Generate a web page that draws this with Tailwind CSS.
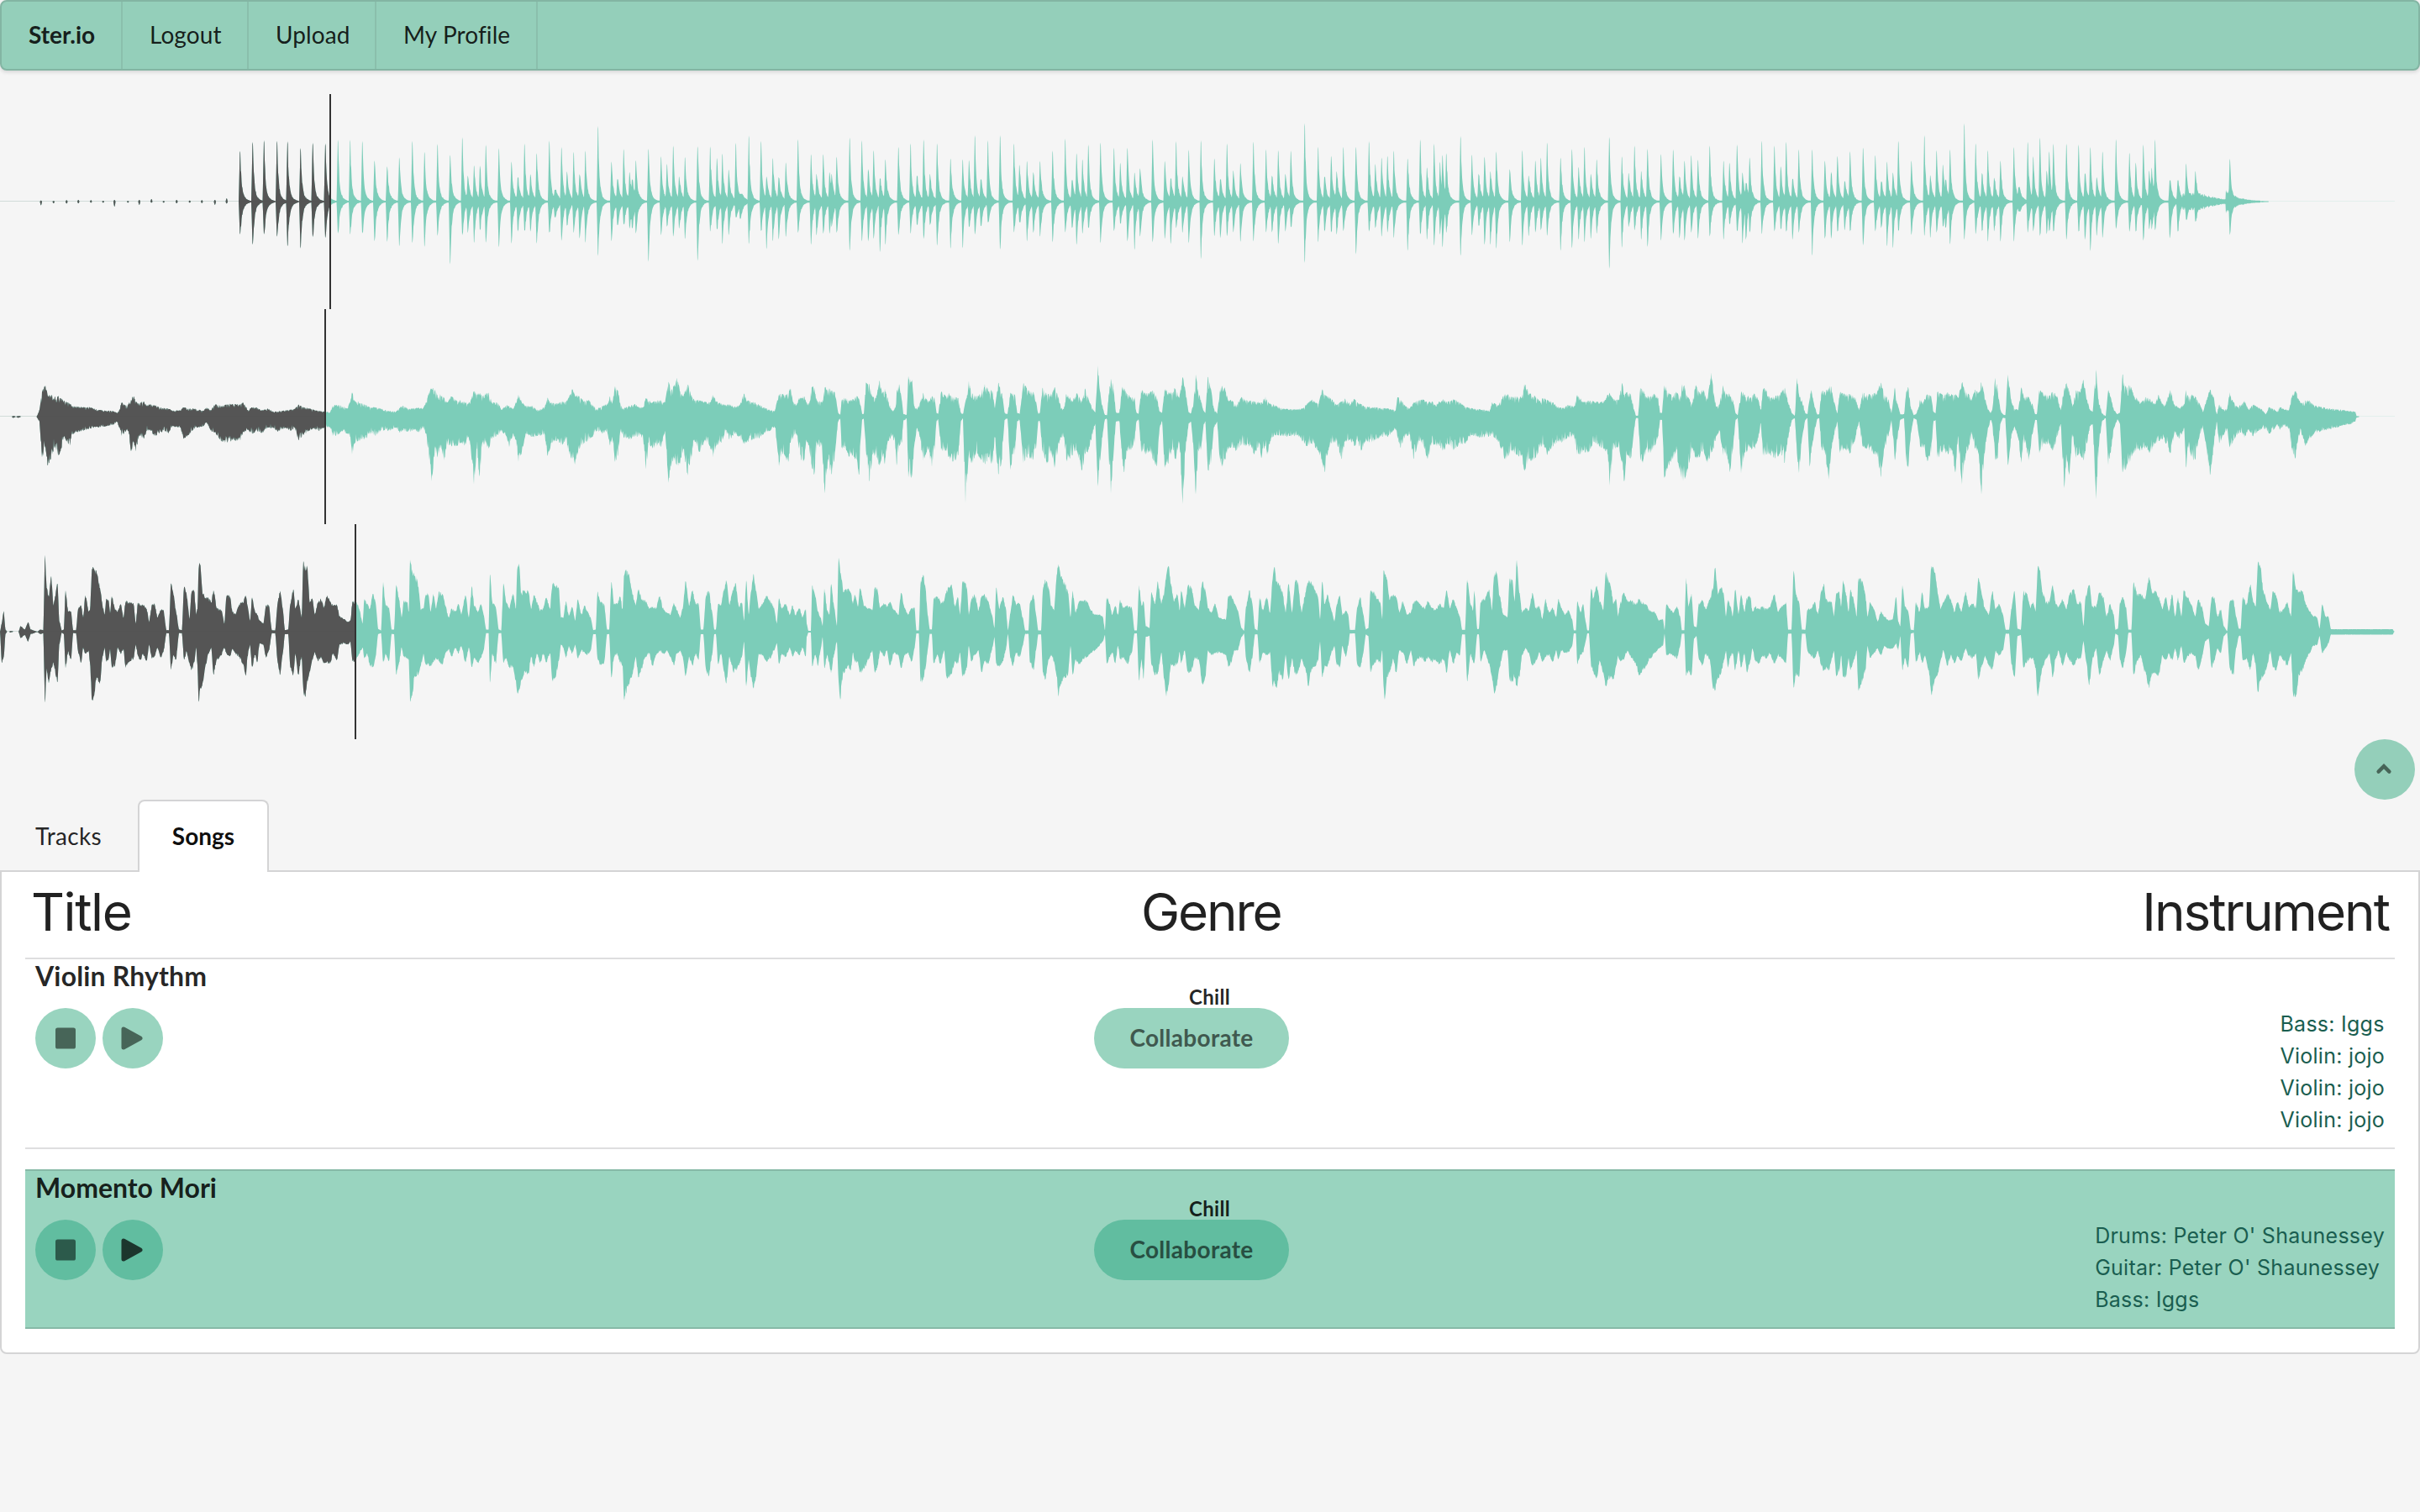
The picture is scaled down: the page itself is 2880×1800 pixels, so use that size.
<!DOCTYPE html>
<html lang="en">
<head>
<meta charset="utf-8">
<title>Ster.io</title>
<script src="https://cdn.jsdelivr.net/npm/@tailwindcss/browser@4"></script>
</head>
<body class="bg-[#f5f5f5] text-[28px] leading-[28px] font-['Lato',sans-serif] text-black/87 min-h-screen">

<nav class="flex h-[84px] rounded-lg border-2 border-[#83b5a3] bg-[#94cfba] shadow-[0_2px_4px_0_rgba(34,36,38,0.15)]">
  <a class="flex items-center pl-8 pr-[30px] pb-0.5 w-[144px] border-r-2 border-[#8abfac] font-bold">Ster.io</a>
  <a class="flex items-center pl-8 pr-[30px] pb-0.5 w-[150px] border-r-2 border-[#8abfac] tracking-[0.1px]">Logout</a>
  <a class="flex items-center pl-8 pr-[30px] pb-0.5 w-[152px] border-r-2 border-[#8abfac] tracking-[0.1px]">Upload</a>
  <a class="flex items-center pl-8 pr-[30px] pb-0.5 w-[192px] border-r-2 border-[#8abfac] tracking-[0.1px] whitespace-nowrap">My Profile</a>
</nav>

<main class="pt-7">
  <section>
    <div class="relative h-64"><svg id="drums" class="block w-full h-64" viewBox="0 0 2880 256"></svg><div class="absolute inset-y-0 left-[392px] w-0.5 bg-[#333]"></div></div>
    <div class="relative h-64"><svg id="guitar" class="block w-full h-64" viewBox="0 0 2880 256"></svg><div class="absolute inset-y-0 left-[386px] w-0.5 bg-[#333]"></div></div>
    <div class="relative h-64"><svg id="bass" class="block w-full h-64" viewBox="0 0 2880 256"></svg><div class="absolute inset-y-0 left-[422px] w-0.5 bg-[#333]"></div></div>
  </section>

  <div class="flex justify-end pr-1.5">
    <button class="size-[72px] rounded-full bg-[#94cfba] flex items-center justify-center">
      <svg class="w-[20px] h-[14px] mr-0.5 -mt-0.5" viewBox="0 0 20 14"><path d="M3.6 10.6 L10 4.2 L16.4 10.6" fill="none" stroke="#476558" stroke-width="4.4" stroke-linecap="round" stroke-linejoin="miter"/></svg>
    </button>
  </div>

  <div class="flex h-[84px]">
    <a class="flex items-center pl-[42px] w-[164px] pt-px tracking-[0.3px]">Tracks</a>
    <a class="relative z-10 flex items-center justify-center w-[156px] h-[86px] border-2 border-b-0 border-[#d4d4d5] rounded-t-lg bg-white font-bold text-black/95 pb-0.5">Songs</a>
  </div>

  <section class="h-[576px] border-2 border-[#d4d4d5] rounded-b-lg bg-white px-7">
    <header class="flex h-[102px] font-['Inter',sans-serif] text-[62px] leading-[96px]">
      <h2 class="w-[1272px] pl-[7px] tracking-[-1.4px]">Title</h2>
      <h2 class="w-[232px] pl-[56px] tracking-[-2.2px]">Genre</h2>
      <h2 class="flex-1 text-right pr-[7px] tracking-[-2px]">Instrument</h2>
    </header>

    <article class="flex h-[228px] border-y-2 border-[#dededf]">
      <div class="w-[1272px] pl-3">
        <h3 class="h-[58px] pt-1 text-[32px] leading-8 font-bold tracking-[0.15px]">Violin Rhythm</h3>
        <div class="flex gap-2 text-[#476558]">
          <button class="size-[72px] rounded-full bg-[#99d4bf] flex items-center justify-center"><svg class="size-[26px]" viewBox="0 0 26 26"><rect x="1" y="0.5" width="24" height="25" rx="2.6" fill="currentColor"/></svg></button>
          <button class="size-[72px] rounded-full bg-[#99d4bf] flex items-center justify-center"><svg class="w-[26px] h-[30px] mr-0.5" viewBox="0 0 26 30"><path d="M3 4v22L23 15z" fill="currentColor" stroke="currentColor" stroke-width="5" stroke-linejoin="round"/></svg></button>
        </div>
      </div>
      <div class="w-[232px]">
        <p class="h-[58px] pl-[43px] pt-[33px] text-center text-[24px] leading-6 font-bold tracking-[0.3px]">Chill</p>
        <button class="w-full h-[72px] rounded-full bg-[#99d4bf] text-[#40594f] font-bold tracking-[0.3px] pb-0.5">Collaborate</button>
      </div>
      <div class="flex-1 flex justify-end pr-3 pt-[58px]">
        <ul class="font-['Inter',sans-serif] text-[25px] leading-[38px] tracking-[0.25px] text-[#1a5e50]">
          <li>Bass: Iggs</li><li>Violin: jojo</li><li>Violin: jojo</li><li>Violin: jojo</li>
        </ul>
      </div>
    </article>

    <article class="mt-6 flex h-[190px] border-y-2 border-[#86b9a7] bg-[#99d4bf]">
      <div class="w-[1272px] pl-3">
        <h3 class="h-[58px] pt-1 text-[32px] leading-8 font-bold">Momento Mori</h3>
        <div class="flex gap-2">
          <button class="size-[72px] rounded-full bg-[#61bda0] text-[#2c5a4b] flex items-center justify-center"><svg class="size-[26px]" viewBox="0 0 26 26"><rect x="1" y="0.5" width="24" height="25" rx="2.6" fill="currentColor"/></svg></button>
          <button class="size-[72px] rounded-full bg-[#61bda0] text-[#1c362d] flex items-center justify-center"><svg class="w-[26px] h-[30px] mr-0.5" viewBox="0 0 26 30"><path d="M3 4v22L23 15z" fill="currentColor" stroke="currentColor" stroke-width="5" stroke-linejoin="round"/></svg></button>
        </div>
      </div>
      <div class="w-[232px]">
        <p class="h-[58px] pl-[43px] pt-[33px] text-center text-[24px] leading-6 font-bold tracking-[0.3px]">Chill</p>
        <button class="w-full h-[72px] rounded-full bg-[#61bda0] text-[#284f42] font-bold tracking-[0.3px] pb-0.5">Collaborate</button>
      </div>
      <div class="flex-1 flex justify-end pr-3 pt-[58px]">
        <ul class="font-['Inter',sans-serif] text-[25px] leading-[38px] tracking-[0.26px] text-[#1a5e50]">
          <li>Drums: Peter O' Shaunessey</li><li>Guitar: Peter O' Shaunessey</li><li>Bass: Iggs</li>
        </ul>
      </div>
    </article>
  </section>
</main>

<script>
// Each track is stored in three chunks of 960px. A chunk lists "x:top,bottom" samples
// on its own grid: x runs 0-1568, and mid/scale give the zero line and vertical units per pixel.
const drums = [
 {mid:718, scale:3, data:"79:714,731;104:716,724;129:713,725;152:712,724;176:713,722;200:715,722;222:712,735;248:716,722;270:712,729;294:709,722;318:716,722;343:712,724;368:714,722;392:713,723;417:712,729;440:707,725;466:537,835;491:505,872;513:499,835;538:501,843;559:503,878;584:527,885;608:508,845;632:510,848;657:497,832;680:497,836;704:501,832;728:571,860;752:592,862;776:560,878;801:501,866;825:540,880;850:512,840;875:551,942;898:488,838;909:625,830;921:588,866;933:590,820;944:515,865;969:527,881;994:575,868;1006:630,825;1019:510,824;1031:620,825;1043:545,868;1067:500,830;1078:675,775;1091:523,858;1102:610,805;1115:540,830;1126:620,850;1138:536,865;1162:448,912;1188:575,860;1200:637,803;1212:530,800;1223:612,815;1228:638,815;1236:570,832;1260:529,933;1285:556,838;1296:583,808;1308:518,843;1320:628,815;1331:558,852;1356:520,930;1380:521,825;1393:562,818;1404:546,870;1416:603,838;1430:508,775;1438:690,780;1455:482,870;1479:501,824;1490:628,888;1502:562,860;1513:630,853;1527:578,845;1551:495,830"},
 {mid:273, scale:1.96, data:"8:162,374;19:208,352;32:162,348;44:204,348;48:208,332;58:168,346;83:123,388;107:130,366;119:197,366;130:153,360;142:218,391;153:174,374;178:145,351;202:137,348;214:212,328;227:128,360;239:208,328;253:137,376;279:172,383;303:174,382;315:176,333;327:118,350;338:220,331;352:130,322;376:118,385;403:137,345;413:187,322;428:178,366;440:204,346;453:178,355;478:154,368;502:126,345;515:222,335;524:160,374;536:174,348;547:140,335;571:135,370;597:147,342;609:182,325;623:147,366;637:205,386;648:195,355;672:128,368;696:178,360;707:218,372;718:132,335;730:214,346;742:152,370;766:130,407;792:172,354;804:220,358;817:137,354;829:200,345;843:183,367;868:133,366;893:151,345;904:212,345;916:153,372;930:208,343;941:154,333;968:90,416;994:145,368;1006:214,343;1019:166,345;1030:202,350;1043:145,342;1067:145,396;1093:132,343;1105:185,335;1117:170,355;1129:166,345;1141:154,358;1168:172,388;1192:128,350;1205:193,362;1219:138,376;1231:180,350;1236:164,380;1243:160,346;1271:120,400;1293:163,352;1306:208,330;1317:168,374;1329:202,374;1340:156,383;1366:197,368;1391:153,376;1403:212,354;1416:177,345;1427:170,340;1439:135,353;1465:170,388;1487:150,382;1500:192,362;1512:145,368;1524:208,360;1535:174,348;1560:122,430"},
 {mid:249, scale:1.782, data:"16:153,347;29:188,303;41:130,310;54:184,330;66:137,345;92:148,332;116:138,318;128:195,327;138:162,332;151:150,315;164:160,328;187:130,323;214:162,330;225:166,297;240:128,312;251:187,338;257:209,330;265:155,315;288:120,318;313:130,312;325:174,308;336:122,313;348:200,330;360:138,315;386:138,364;411:162,328;423:186,328;435:152,313;449:205,310;460:142,312;485:134,342;509:150,312;520:206,305;532:164,344;543:187,348;554:120,312;579:162,320;604:108,322;616:193,326;628:140,315;640:170,303;645:202,305;654:138,340;682:83,330;704:125,318;716:188,312;728:140,334;740:198,312;752:162,334;778:133,334;787:218,270;805:122,315;816:153,312;829:113,322;842:183,318;847:142,312;855:126,313;880:126,330;904:128,313;916:188,330;927:133,354;939:197,322;951:142,326;977:116,307;1003:145,313;1015:166,313;1030:128,332;1041:183,308;1046:177,308;1053:117,310;1081:203,327;1097:203,313;1113:168,288;1131:184,292;1198:158,320"}
];
const guitar = [
 {mid:393, scale:2.904, data:"0:393,393;23:393,393;25:391,397;28:391,396;31:393,393;35:391,397;38:391,395;41:393,393;71:393,393;73:388,398;77:370,410;82:310,530;88:288,490;92:320,555;98:322,535;106:328,490;112:325,520;118:330,510;124:340,460;136:350,490;140:358,450;160:362,440;175:362,432;190:370,428;205:373,425;220:374,420;228:381,412;232:370,430;236:346,458;243:355,445;250:352,440;255:335,510;260:325,480;264:342,510;270:348,455;280:344,465;285:355,440;292:352,437;300:355,458;310:362,445;320:365,440;327:366,448;335:373,426;350:372,428;357:362,466;365:366,455;380:367,430;395:374,425;402:362,412;410:372,440;418:352,445;430:358,475;443:352,478;452:352,470;467:352,474;473:346,445;482:372,437;490:362,450;498:362,440;510:372,447;520:366,430;530:376,430;540:376,442;555:372,430;565:370,440;573:368,430;580:352,470;590:362,455;600:366,440;610:370,432;620:374,440;632:377,428;642:378,428;647:356,458;655:354,455;665:358,440;675:364,450;680:345,460;684:312,520;690:340,480;700:348,470;712:355,465;720:362,445;730:362,458;740:366,438;755:374,440;770:376,430;777:364,445;783:356,440;795:368,442;805:364,438;815:364,445;822:366,430;828:345,450;834:312,520;839:300,610;846:302,500;850:318,530;857:320,490;863:330,540;870:345,480;877:325,490;887:340,490;895:338,480;903:345,490;910:348,460;915:340,490;921:308,620;927:318,500;932:318,595;938:322,480;950:314,500;956:346,465;968:346,455;975:370,440;985:355,460;990:358,495;997:368,450;1003:345,470;1008:318,545;1014:345,510;1022:358,450;1035:358,460;1047:372,455;1058:362,450;1064:330,525;1072:348,480;1085:350,470;1090:342,490;1100:345,470;1106:330,510;1112:302,535;1118:325,555;1125:325,500;1135:342,480;1145:338,470;1152:355,460;1160:368,440;1172:358,450;1180:350,440;1186:325,490;1190:350,460;1196:290,545;1201:305,520;1206:355,440;1212:366,460;1222:358,470;1235:352,460;1245:362,455;1250:362,470;1255:330,570;1261:340,480;1268:345,500;1278:340,490;1285:340,495;1293:345,440;1299:276,615;1306:300,540;1311:285,530;1316:262,558;1322:310,545;1328:325,500;1337:286,590;1343:318,540;1349:335,470;1360:338,510;1370:345,470;1380:345,490;1386:318,530;1392:340,490;1402:350,480;1410:354,440;1418:352,470;1428:360,450;1437:355,460;1446:316,485;1452:338,475;1462:345,470;1475:352,465;1485:362,450;1495:370,440;1506:375,430;1510:345,480;1514:320,560;1520:318,510;1527:320,530;1532:312,545;1537:298,480;1542:345,460;1548:355,450;1553:330,500;1558:330,540;1563:325,540;1567:345,470"},
 {mid:774, scale:1.96, data:"0:742,830;5:745,840;10:706,885;15:708,905;20:738,835;30:742,850;35:708,948;42:710,870;48:715,905;54:718,870;58:740,820;61:765,785;65:770,778;68:735,845;75:732,840;82:738,865;90:735,860;97:728,870;102:735,905;105:750,820;108:768,780;111:768,780;115:696,850;122:700,920;128:730,860;135:732,860;141:692,885;147:722,860;152:710,882;157:730,835;163:755,820;168:762,820;173:750,850;175:720,885;180:700,840;185:740,830;188:768,785;194:770,778;198:682,912;205:690,905;209:750,840;215:758,800;220:745,820;226:720,875;235:740,845;243:728,888;248:730,850;252:765,785;256:768,780;261:718,850;270:728,850;277:722,865;285:730,875;295:732,860;300:765,785;304:768,778;309:740,970;315:692,860;322:722,880;330:730,850;338:722,870;346:700,880;354:718,865;361:715,880;366:755,820;372:698,905;380:720,870;385:765,782;390:768,778;396:720,895;405:725,850;409:765,785;414:768,782;421:698,880;430:715,860;440:718,870;446:740,845;450:766,785;453:766,785;458:710,850;467:725,880;475:722,850;482:708,890;490:732,835;495:755,820;500:757,820;505:722,875;515:738,860;525:722,850;535:740,895;541:710,860;548:735,850;555:755,815;561:765,790;566:658,932;571:720,870;576:755,810;580:770,780;584:770,780;587:720,860;591:688,948;597:710,850;601:764,785;608:766,784;613:706,870;617:710,900;622:722,850;630:730,850;637:730,835;641:765,785;645:768,780;650:714,850;658:722,860;666:722,850;673:715,870;681:732,885;686:762,800;691:765,785;696:712,890;703:718,880;710:720,850;717:710,870;724:732,830;731:684,972;737:718,850;742:764,790;747:766,786;752:740,850;756:678,950;761:720,850;766:735,850;771:760,800;775:766,785;780:684,895;786:710,880;791:755,800;798:767,785;803:720,870;807:704,888;813:712,870;819:738,850;827:738,840;835:748,850;845:730,835;855:738,840;862:738,840;870:740,860;880:742,835;884:742,868;892:728,835;895:740,860;903:745,820;915:750,815;925:756,818;940:757,818;955:758,815;965:755,830;973:745,840;982:736,835;995:746,850;1003:712,880;1007:725,900;1012:728,860;1018:732,835;1030:748,830;1040:740,870;1047:734,830;1055:745,825;1064:734,840;1072:745,830;1077:746,852;1085:752,830;1100:752,830;1115:754,820;1130:756,818;1145:760,800;1148:730,820;1155:735,845;1162:748,820;1172:755,815;1180:742,870;1190:738,830;1200:736,840;1207:742,870;1215:740,835;1222:748,838;1230:740,840;1238:735,850;1248:740,835;1258:736,850;1268:740,835;1280:752,835;1292:755,815;1310:758,820;1328:760,818;1332:742,815;1345:748,830;1357:722,870;1370:730,850;1380:728,860;1390:732,860;1395:700,895;1405:720,870;1415:728,870;1425:738,845;1432:733,835;1440:736,860;1450:742,840;1460:752,830;1470:755,830;1480:748,820;1492:750,820;1498:725,860;1510:742,850;1520:738,855;1530:740,830;1540:742,840;1550:740,845;1557:725,860;1561:720,930;1567:735,850"},
 {mid:705, scale:1.782, data:"0:668,770;10:672,765;17:636,800;21:660,838;26:655,780;34:660,790;40:690,735;44:703,708;48:703,708;52:648,790;57:650,800;64:665,775;72:662,780;80:658,765;87:668,745;91:697,712;95:697,712;99:640,830;106:655,805;115:665,790;122:655,780;130:665,820;134:638,835;140:645,830;147:668,800;153:680,770;160:640,790;167:655,790;175:650,770;183:670,800;190:614,780;195:655,770;200:685,745;207:680,735;213:640,785;220:660,780;226:658,820;233:670,770;238:698,712;242:702,708;248:655,822;256:660,780;265:665,770;274:658,770;282:670,750;287:690,718;291:650,785;296:648,785;305:668,780;314:665,790;325:658,780;333:645,800;340:675,750;347:698,712;353:703,708;357:625,780;361:660,822;367:670,750;373:698,712;377:700,708;381:665,808;385:650,780;390:680,740;396:700,710;400:700,708;404:652,770;412:655,780;419:645,835;423:642,780;428:670,750;435:698,715;440:655,780;450:660,770;460:660,780;470:665,750;478:692,715;484:655,765;495:660,770;505:660,780;513:655,780;520:635,830;527:660,770;535:670,745;541:698,712;547:645,795;553:680,745;558:700,712;565:700,708;569:655,800;573:645,810;578:685,740;584:702,708;590:698,712;596:670,765;603:675,770;610:660,795;617:662,780;622:695,715;626:698,712;630:655,790;640:660,775;650:655,780;658:660,775;665:660,820;670:665,750;678:635,845;685:655,780;692:660,765;697:670,740;703:650,770;710:655,780;715:635,865;720:655,790;727:685,740;733:698,712;737:690,720;742:625,795;747:645,790;752:690,720;757:700,708;762:702,708;767:618,805;773:670,750;780:690,725;787:690,750;793:645,800;799:665,750;807:665,795;815:680,740;820:700,712;823:700,712;828:650,780;838:660,760;847:662,760;855:655,775;863:665,745;870:692,720;876:645,852;881:635,790;886:650,825;893:685,745;899:652,790;907:655,780;914:630,795;920:670,760;927:692,725;932:695,720;938:608,875;943:670,770;950:698,715;957:704,708;962:650,805;967:665,780;973:690,730;980:700,710;985:695,720;990:618,820;995:645,815;1003:640,800;1010:655,780;1018:670,770;1027:675,775;1035:665,765;1043:668,780;1053:680,760;1060:660,755;1068:680,750;1075:675,760;1083:650,780;1090:680,740;1100:688,750;1110:680,730;1113:650,810;1118:665,765;1125:660,790;1132:665,790;1140:680,740;1147:695,730;1153:670,770;1160:650,825;1167:665,770;1173:700,715;1178:680,760;1185:690,745;1193:690,730;1198:655,768;1205:675,755;1213:685,740;1222:680,735;1227:672,748;1235:690,730;1243:680,745;1252:685,735;1260:690,730;1268:700,730;1275:685,740;1285:690,730;1290:695,720;1295:685,732;1303:690,722;1313:692,730;1318:665,770;1326:652,790;1333:672,745;1338:678,740;1345:672,765;1352:672,750;1362:682,740;1375:685,735;1390:688,730;1405:690,728;1420:692,722;1435:694,720;1442:695,715;1445:704,707;1449:704,706;1450:705,705;1567:705,705"}
];
const bass = [
 {mid:1137, scale:2.904, data:"0:1137,1137;3:1110,1240;7:1068,1220;11:1130,1145;14:1137,1137;18:1137,1137;20:1135,1140;24:1135,1138;26:1137,1137;36:1137,1137;40:1118,1158;48:1130,1148;55:1105,1170;60:1130,1145;73:1137,1138;78:1130,1145;84:1132,1142;87:880,1375;91:990,1260;95:1020,1310;100:950,1260;104:1050,1240;112:978,1305;115:1100,1180;120:1133,1140;124:1130,1145;127:998,1260;132:1070,1205;138:1070,1230;142:1132,1142;148:1132,1142;152:1060,1205;158:1050,1240;162:1090,1190;166:1015,1210;172:1070,1200;175:1065,1240;179:925,1365;184:935,1340;188:940,1290;194:990,1305;199:1050,1220;203:1080,1190;207:1028,1235;211:1030,1230;214:1075,1195;217:1018,1255;224:1065,1250;229:1070,1190;234:1045,1210;240:1090,1195;244:1035,1258;249:1040,1240;253:1040,1235;260:1045,1225;264:1110,1180;268:1040,1215;273:1050,1232;278:1048,1210;285:1060,1235;290:1105,1180;295:1050,1225;300:1042,1220;306:1090,1190;313:1065,1222;318:1065,1205;323:1132,1142;328:1132,1142;332:975,1265;337:1015,1215;342:1070,1230;348:1130,1142;354:1132,1142;358:988,1230;363:1010,1205;368:1095,1240;372:1005,1265;377:1000,1240;381:1080,1190;384:1060,1250;386:925,1372;389:912,1330;394:1010,1310;399:1025,1250;405:1025,1210;411:1040,1190;415:998,1280;421:1060,1230;430:1065,1215;436:1110,1190;440:1020,1210;447:1018,1220;452:1070,1195;458:1080,1210;465:1045,1220;473:1040,1245;478:1015,1285;481:1050,1220;486:1100,1180;490:1022,1255;496:1070,1215;500:1080,1240;505:1100,1175;512:1110,1180;517:1050,1225;523:1050,1200;528:1132,1142;535:1133,1142;540:1040,1240;545:1000,1280;550:1060,1210;554:1132,1145;560:1130,1145;564:1045,1255;570:995,1280;574:1060,1210;580:1030,1280;586:1090,1220;590:900,1330;593:930,1355;597:915,1300;602:1040,1270;607:1025,1230;612:1080,1205;618:1040,1235;624:1030,1220;630:1055,1240;636:1015,1235;641:1035,1245;648:1050,1210;655:1050,1230;660:1085,1180;668:1095,1175;676:1105,1180;681:1100,1170;685:1035,1235;690:1040,1235;693:1040,1225;698:1060,1210;705:1110,1190;708:1030,1225;714:1045,1210;719:1060,1250;725:1010,1255;730:1040,1220;735:1128,1145;741:1133,1142;745:970,1240;750:1050,1210;756:1055,1235;761:1130,1145;766:1130,1145;770:980,1280;776:1030,1240;781:1090,1190;785:1035,1220;792:1040,1225;795:1070,1230;797:895,1368;802:940,1340;806:950,1285;812:970,1280;818:1065,1250;823:1060,1210;827:1015,1245;832:1010,1245;837:1070,1250;842:1010,1240;848:1060,1225;853:1005,1235;860:1010,1245;866:1050,1210;872:1090,1195;878:1060,1220;885:1070,1190;891:1045,1210;897:1080,1185;905:1015,1240;911:1090,1190;917:985,1255;922:1050,1225;929:1070,1240;935:1045,1225;940:1080,1200;945:1130,1142;950:1130,1142;952:945,1308;957:1040,1210;964:1055,1245;969:1130,1142;974:1133,1142;978:975,1240;984:1040,1225;990:1060,1255;997:1010,1255;1003:1060,1300;1005:930,1340;1009:915,1330;1013:1010,1300;1020:1000,1270;1027:1005,1278;1032:1060,1220;1038:1015,1255;1044:1040,1210;1050:1065,1240;1056:1060,1210;1062:1025,1240;1069:1060,1210;1074:975,1300;1080:985,1290;1086:990,1235;1090:1090,1180;1095:1090,1190;1100:1035,1225;1106:1085,1185;1112:1055,1210;1118:1100,1180;1123:1030,1225;1130:1080,1200;1136:1050,1205;1142:1070,1215;1148:1090,1200;1153:1132,1145;1158:1130,1145;1161:1005,1225;1167:1040,1245;1174:1045,1240;1180:1130,1145;1184:1130,1145;1188:970,1290;1194:1045,1220;1200:1045,1210;1205:1020,1240;1210:1060,1250;1213:950,1360;1217:935,1340;1222:945,1310;1229:1010,1280;1236:1050,1220;1241:995,1290;1247:1030,1260;1254:1035,1220;1262:1060,1210;1268:1055,1250;1275:1060,1215;1282:1020,1200;1290:1065,1210;1297:1075,1200;1303:1080,1220;1310:1040,1250;1316:1065,1210;1322:1090,1200;1327:1060,1220;1333:968,1285;1339:1050,1220;1346:1000,1250;1352:1045,1210;1358:1045,1230;1362:1130,1145;1367:1130,1145;1372:1020,1260;1378:1000,1285;1384:1070,1215;1388:1130,1145;1392:1130,1145;1396:1045,1245;1401:1050,1210;1407:1000,1270;1412:968,1310;1418:1045,1220;1425:1000,1270;1430:975,1265;1436:1050,1250;1442:1040,1220;1446:1100,1170;1450:965,1320;1455:1080,1230;1460:1000,1290;1464:945,1325;1469:1000,1290;1475:1060,1210;1482:1045,1215;1490:1020,1235;1497:1035,1225;1504:1055,1200;1510:1110,1175;1514:1025,1245;1520:1060,1210;1527:1045,1220;1535:1080,1190;1540:1050,1220;1546:1080,1200;1554:1060,1215;1560:1090,1190;1566:1060,1220"},
 {mid:1278, scale:1.96, data:"0:1260,1290;3:1276,1280;8:1276,1280;11:1175,1355;17:1200,1330;21:1232,1355;27:1245,1320;31:1265,1290;34:1180,1360;40:1230,1330;44:1240,1350;47:1170,1372;53:1220,1330;59:1265,1300;62:1110,1390;65:1145,1432;68:1160,1395;72:1188,1370;80:1182,1355;86:1190,1365;90:1215,1325;94:1195,1345;100:1222,1345;104:1180,1370;112:1220,1360;120:1225,1340;127:1230,1320;132:1180,1370;137:1180,1360;143:1225,1320;150:1215,1335;156:1220,1320;162:1212,1355;170:1230,1325;178:1240,1330;184:1190,1360;190:1225,1330;197:1240,1325;204:1225,1345;210:1225,1315;213:1275,1282;218:1275,1282;221:1170,1390;226:1150,1388;231:1180,1360;235:1240,1320;239:1273,1283;243:1273,1283;247:1205,1350;254:1200,1330;260:1210,1350;267:1210,1320;272:1185,1380;281:1172,1375;288:1220,1345;294:1200,1350;298:1240,1325;303:1165,1380;311:1175,1360;315:1240,1310;320:1205,1345;327:1195,1330;334:1230,1320;340:1200,1370;346:1195,1345;353:1210,1350;360:1240,1320;365:1270,1290;368:1178,1350;374:1225,1355;381:1200,1345;387:1225,1320;391:1275,1283;396:1235,1340;401:1195,1355;407:1215,1325;414:1215,1335;420:1245,1310;425:1275,1283;431:1275,1283;434:1215,1345;441:1195,1365;446:1240,1320;450:1275,1284;456:1275,1284;459:1185,1370;464:1160,1385;470:1180,1340;475:1220,1330;481:1230,1345;486:1150,1380;489:1125,1425;494:1155,1395;500:1165,1380;508:1190,1375;513:1245,1310;517:1185,1375;523:1235,1340;530:1210,1350;537:1210,1340;544:1208,1335;552:1230,1325;560:1240,1320;568:1240,1310;576:1245,1300;580:1275,1285;583:1200,1350;589:1215,1335;594:1240,1325;600:1220,1350;605:1240,1310;609:1205,1340;616:1225,1335;624:1220,1350;632:1225,1325;637:1275,1282;642:1275,1282;646:1172,1388;651:1220,1340;655:1210,1385;659:1265,1290;666:1270,1287;670:1190,1350;677:1215,1375;683:1165,1370;689:1215,1325;695:1190,1385;699:1150,1425;703:1130,1400;708:1170,1350;714:1210,1355;720:1195,1350;725:1230,1325;728:1185,1350;735:1225,1320;741:1175,1370;748:1180,1365;755:1220,1335;762:1230,1340;769:1165,1395;775:1185,1380;780:1225,1320;787:1235,1330;794:1215,1325;801:1245,1325;808:1250,1325;815:1250,1330;819:1200,1355;825:1195,1350;831:1215,1320;838:1230,1320;845:1270,1290;850:1276,1282;854:1220,1340;861:1185,1370;866:1210,1340;871:1272,1284;876:1275,1284;880:1200,1350;887:1230,1325;894:1200,1330;901:1235,1325;906:1160,1400;909:1132,1390;913:1165,1405;919:1175,1370;925:1190,1385;931:1235,1330;937:1170,1385;943:1235,1340;950:1165,1375;955:1165,1370;962:1235,1340;969:1190,1360;975:1165,1400;982:1170,1360;988:1185,1355;994:1200,1345;998:1250,1300;1002:1165,1380;1007:1215,1355;1013:1195,1355;1020:1230,1325;1026:1255,1310;1030:1220,1350;1036:1195,1360;1041:1240,1310;1048:1230,1335;1053:1240,1310;1056:1274,1282;1066:1274,1282;1070:1225,1350;1076:1200,1360;1081:1235,1330;1087:1273,1284;1092:1270,1288;1096:1185,1370;1103:1190,1350;1109:1205,1340;1115:1210,1350;1119:1250,1320;1121:1140,1400;1124:1150,1432;1128:1160,1380;1133:1205,1370;1140:1195,1340;1146:1200,1370;1152:1235,1320;1159:1210,1325;1167:1240,1350;1174:1235,1320;1180:1210,1355;1187:1210,1340;1194:1220,1335;1201:1225,1345;1208:1210,1335;1215:1225,1345;1222:1230,1340;1230:1215,1350;1238:1225,1340;1244:1185,1370;1250:1225,1320;1257:1205,1350;1263:1225,1325;1270:1245,1330;1274:1274,1284;1280:1274,1284;1284:1160,1390;1290:1215,1330;1295:1230,1345;1298:1185,1350;1303:1272,1284;1307:1272,1284;1310:1210,1345;1317:1205,1320;1327:1185,1350;1332:1230,1380;1336:1150,1415;1341:1145,1400;1347:1195,1360;1354:1240,1320;1362:1245,1320;1366:1160,1385;1371:1160,1390;1376:1210,1380;1380:1115,1400;1385:1190,1380;1391:1235,1330;1397:1225,1315;1404:1230,1325;1410:1190,1355;1417:1225,1345;1424:1220,1325;1430:1250,1345;1436:1205,1335;1443:1235,1330;1450:1225,1345;1457:1245,1320;1461:1205,1340;1467:1225,1320;1474:1240,1325;1481:1230,1325;1488:1250,1310;1491:1275,1282;1495:1275,1282;1498:1210,1350;1504:1235,1330;1509:1215,1325;1514:1255,1300;1517:1275,1282;1521:1275,1282;1525:1180,1355;1530:1200,1370;1536:1175,1380;1542:1210,1345;1548:1230,1370;1553:1145,1400;1559:1160,1380;1565:1185,1380"},
 {mid:1161, scale:1.782, data:"0:1105,1258;6:1095,1230;9:1130,1210;13:1105,1220;20:1082,1218;28:1100,1200;36:1098,1215;43:1105,1225;50:1095,1252;57:1102,1240;64:1105,1230;72:1120,1215;80:1120,1205;88:1138,1195;96:1135,1190;100:1158,1165;103:1105,1210;110:1115,1205;117:1122,1210;124:1110,1215;130:1130,1190;133:1158,1165;138:1158,1165;141:1050,1250;146:1110,1240;152:1082,1250;157:1150,1175;162:1152,1170;166:1105,1215;173:1098,1230;180:1115,1205;188:1095,1220;194:1070,1278;198:1030,1280;203:1085,1255;210:1070,1245;215:1085,1220;219:1130,1200;223:1095,1235;228:1110,1210;232:1130,1205;237:1075,1240;243:1125,1200;248:1085,1235;255:1120,1205;260:1092,1245;266:1090,1220;270:1120,1195;276:1110,1220;283:1115,1225;290:1110,1210;297:1115,1215;304:1110,1205;313:1085,1225;320:1120,1210;328:1108,1215;336:1100,1225;340:1157,1165;346:1157,1165;350:1035,1275;355:1085,1245;361:1100,1255;367:1157,1165;373:1157,1165;377:1115,1200;384:1115,1210;391:1100,1215;398:1125,1200;404:1078,1230;409:1062,1240;413:1095,1235;419:1100,1240;425:1100,1215;429:1130,1200;433:1085,1250;439:1080,1240;443:1110,1210;447:1055,1255;452:1080,1255;457:1120,1215;461:1075,1240;467:1095,1220;473:1130,1200;476:1050,1280;483:1055,1265;490:1085,1240;494:1130,1190;499:1100,1215;506:1115,1205;514:1140,1195;520:1120,1210;527:1130,1190;535:1138,1195;543:1135,1195;550:1090,1185;554:1140,1200;558:1150,1170;562:1065,1240;567:1110,1215;573:1120,1235;578:1157,1165;584:1158,1163;588:1100,1225;595:1120,1205;600:1080,1225;606:1115,1210;613:1110,1240;618:1025,1290;625:1040,1258;631:1085,1245;636:1115,1220;642:1100,1200;649:1085,1230;656:1095,1210;663:1120,1225;669:1100,1210;676:1120,1220;685:1080,1195;691:1110,1210;698:1105,1215;705:1110,1205;710:1050,1260;716:1085,1230;723:1115,1210;730:1125,1230;737:1078,1240;743:1115,1200;750:1105,1210;757:1125,1200;763:1157,1165;769:1157,1165;773:1115,1225;780:1078,1255;786:1155,1170;792:1157,1168;797:1080,1235;803:1080,1225;810:1110,1215;816:1100,1215;821:1120,1235;825:1030,1295;829:1035,1265;834:1080,1235;841:1100,1215;848:1100,1205;854:1065,1255;860:1105,1215;866:1110,1200;873:1095,1230;880:1115,1205;887:1085,1220;895:1075,1230;902:1105,1215;909:1100,1215;914:1150,1180;918:1090,1215;925:1065,1270;931:1110,1220;938:1110,1195;945:1080,1250;952:1090,1220;959:1130,1200;965:1105,1220;973:1125,1190;976:1157,1165;981:1155,1168;985:1100,1220;991:1090,1235;996:1110,1205;1001:1157,1163;1007:1157,1163;1011:1060,1250;1018:1085,1220;1025:1085,1210;1034:1095,1245;1041:1050,1275;1047:1080,1245;1053:1078,1245;1060:1090,1250;1067:1115,1210;1074:1090,1220;1080:1120,1205;1086:1085,1220;1092:1130,1195;1098:1090,1220;1104:1130,1190;1109:1075,1225;1116:1092,1210;1123:1105,1205;1131:1130,1210;1137:1095,1240;1144:1110,1215;1151:1145,1180;1157:1150,1175;1163:1090,1235;1168:1090,1220;1174:1130,1195;1181:1115,1205;1187:1150,1170;1193:1160,1163;1198:1100,1235;1205:1095,1250;1210:1130,1195;1216:1155,1170;1219:1155,1170;1223:1090,1220;1231:1105,1215;1238:1065,1240;1244:1100,1205;1249:1110,1230;1253:1020,1285;1258:1030,1260;1264:1080,1250;1270:1100,1235;1277:1115,1200;1282:1078,1235;1288:1085,1240;1295:1120,1210;1303:1115,1220;1310:1100,1230;1317:1130,1205;1321:1035,1290;1327:1075,1290;1333:1080,1250;1339:1078,1240;1346:1105,1220;1353:1120,1205;1360:1128,1190;1368:1132,1188;1373:1155,1170;1378:1105,1205;1384:1130,1195;1390:1130,1185;1395:1156,1167;1440:1156,1167;1515:1156,1167;1517:1160,1162;1519:1161,1161;1567:1161,1161"}
];

let seed = 7;
const rand = () => (seed = (seed * 16807) % 2147483647) / 2147483647;
const read = chunks => chunks.flatMap((c, i) => c.data.split(";").map(s => {
  const [x, t, b] = s.split(/[:,]/).map(Number);
  return [i * 960 + x * 960 / 1568, (c.mid - t) / c.scale, (b - c.mid) / c.scale];
}));

// Percussive track: every sample is a hit with a sharp attack and a short tail.
function hits(points) {
  const W = 5760, up = new Float32Array(W), dn = new Float32Array(W);
  const put = (x, u, d) => { if (x >= 0 && x < W) { up[x] = Math.max(up[x], u); dn[x] = Math.max(dn[x], d); } };
  for (const [x, u, d] of points) {
    const c = Math.round(x * 2);
    if (u < 8) { put(c - 1, u * .6, d * .6); put(c, u, d); put(c + 1, u, d); put(c + 2, u * .6, d * .6); continue; }
    put(c - 2, u * .3, d * .3); put(c - 1, u * .65, d * .65); put(c, u, d); put(c + 1, u * .96, d * .96);
    for (let j = 2; j < 28; j++) {
      const r = .88 + rand() * .24, body = 17 * Math.exp(-j / 9);
      put(c + j, Math.min(u, (u * .95 * Math.exp(-j / 2.8) + body) * r), Math.min(d, (d * .95 * Math.exp(-j / 3.2) + body) * r));
    }
  }
  for (let x = 5195; x < 5400; x++) { const e = 8.5 * Math.exp(-Math.max(0, x - 5240) / 50) * (.75 + rand() * .5); put(x, e, e); }
  for (let x = 5298; x < 5400; x++) { const e = 12 * Math.exp(-(x - 5300) / 30) * (.8 + rand() * .4); put(x, e, e); }
  for (let x = 931; x < 5380; x++) put(x, 1.2, 1.2);
  return Array.from(up, (u, i) => [i / 2, u, dn[i]]);
}

// Sustained track: interpolate between samples and notch the outline at half-pixel steps.
function envelope(points, rough, ease) {
  const out = [], pts = points.map(p => [Math.round(p[0] * 2) / 2, p[1], p[2]]);
  let k = 0;
  for (let i = 0; i < 5700; i++) {
    const x = i / 2;
    while (k < pts.length - 2 && pts[k + 1][0] <= x) k++;
    const a = pts[k], b = pts[k + 1];
    let t = Math.max(0, Math.min(1, (x - a[0]) / (b[0] - a[0] || 1)));
    if (ease) t = (t + t * t * (3 - 2 * t)) / 2;
    const n = () => t === 0 ? 1.03 : 1.08 - rand() * rand() * rough;
    out.push([x, (a[1] + (b[1] - a[1]) * t) * n(), (a[2] + (b[2] - a[2]) * t) * n()]);
  }
  return out;
}

function draw(id, samples, played) {
  const f = n => n.toFixed(1);
  const top = samples.map(s => f(s[0]) + " " + f(128 - s[1])).join("L");
  const bottom = samples.slice().reverse().map(s => f(s[0]) + " " + f(128 + s[2])).join("L");
  const d = "M" + top + "L" + bottom + "Z";
  document.getElementById(id).innerHTML =
    `<clipPath id="${id}-played"><rect width="${played}" height="256"/></clipPath>` +
    `<rect y="127" width="2850" height="1" fill="#7acdb8" opacity="0.14"/>` +
    `<path d="${d}" fill="#7ccdb9"/>` +
    `<g clip-path="url(#${id}-played)"><path d="${d}" fill="#555"/><rect y="127" width="2850" height="1" fill="#555" opacity="0.12"/></g>`;
}
draw("drums", hits(read(drums)), 392);
draw("guitar", envelope(read(guitar), .45, false), 387);
draw("bass", envelope(read(bass), .16, true), 423);
</script>
</body>
</html>
